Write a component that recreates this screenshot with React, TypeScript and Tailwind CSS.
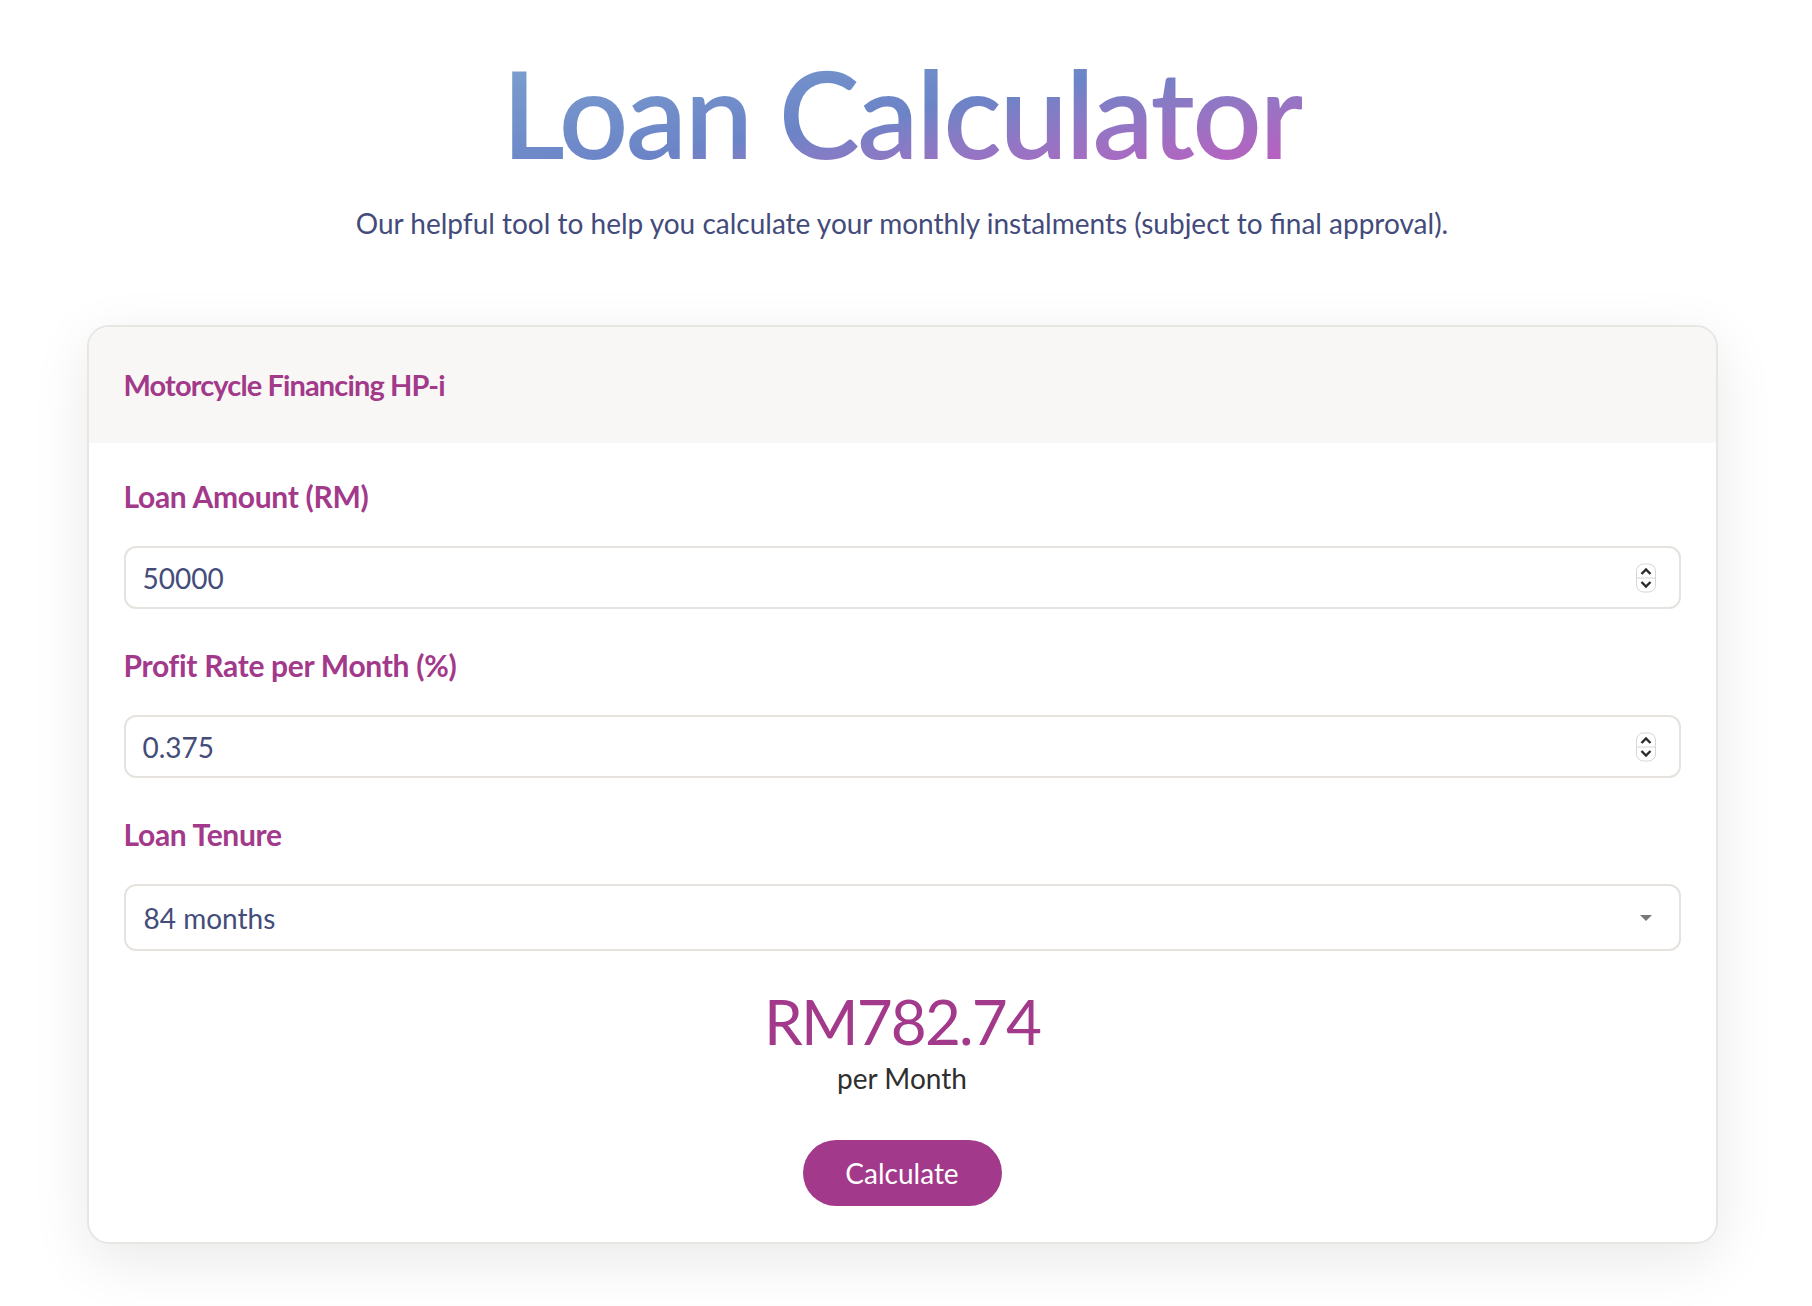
import { useState } from "react";

const font = { fontFamily: "Lato, 'Noto Sans', sans-serif" };

const Spinner = () => (
  <svg width="22" height="30" viewBox="0 0 22 30" className="shrink-0">
    <rect x="1.5" y="1" width="19" height="28" rx="7" fill="#fff" stroke="#d9d6d2" />
    <line x1="1.5" y1="15" x2="20.5" y2="15" stroke="#d9d6d2" />
    <path d="M6.5 11 L11 6.5 L15.5 11" fill="none" stroke="#2a2a2a" strokeWidth="2.4" />
    <path d="M6.5 19 L11 23.5 L15.5 19" fill="none" stroke="#2a2a2a" strokeWidth="2.4" />
  </svg>
);

const NumberField = ({ label, value }: { label: string; value: string }) => (
  <div className="flex flex-col">
    <label className="text-[30px] font-bold text-[#a2398a] tracking-[-0.01em] leading-[40px]">{label}</label>
    <div className="mt-[30px] flex items-center h-[63px] rounded-[12px] border-2 border-[#e6e3de] bg-white pl-[17px] pr-[22px]">
      <input
        readOnly
        value={value}
        className="flex-1 bg-transparent outline-none text-[28px] text-[#444c7a]"
        style={font}
      />
      <Spinner />
    </div>
  </div>
);

export default function App() {
  const [amount] = useState("50000");
  const [rate] = useState("0.375");

  return (
    <div className="min-h-[1306px] bg-white flex flex-col items-center pr-[8px]" style={font}>
      <h1 className="mt-[42px] text-[122px] font-semibold leading-[140px] tracking-[-0.02em] bg-gradient-to-br from-[#7ea3cf] via-[#6b84c7] to-[#c653be] bg-clip-text text-transparent">
        Loan Calculator
      </h1>
      <p className="mt-[23px] text-[28px] text-[#434b7b] leading-[36px]">
        Our helpful tool to help you calculate your monthly instalments (subject to final approval).
      </p>

      <div className="mt-[84px] w-[1631px] rounded-[22px] border-2 border-[#e8e6e2] bg-white shadow-[0_16px_60px_rgba(0,0,0,0.09)] overflow-hidden">
        <div className="h-[116px] bg-[#f8f7f5] flex items-center px-[35px]">
          <h2 className="text-[29px] font-bold text-[#a2398a] tracking-[-0.03em]">Motorcycle Financing HP-i</h2>
        </div>

        <div className="px-[35px] pt-[33px] pb-[36px] flex flex-col gap-[36px]">
          <NumberField label="Loan Amount (RM)" value={amount} />
          <NumberField label="Profit Rate per Month (%)" value={rate} />

          <div className="flex flex-col">
            <label className="text-[30px] font-bold text-[#a2398a] tracking-[-0.01em] leading-[40px]">Loan Tenure</label>
            <div className="mt-[30px] flex items-center h-[67px] rounded-[12px] border-2 border-[#e6e3de] bg-white pl-[18px] pr-[26px]">
              <span className="flex-1 text-[28px] text-[#444c7a]">84 months</span>
              <svg width="14" height="8" viewBox="0 0 14 8">
                <path d="M1 1 L13 1 L7 7 Z" fill="#777" />
              </svg>
            </div>
          </div>

          <div className="-mt-[4px] flex flex-col items-center">
            <div className="text-[62px] leading-[76px] text-[#a2398a] tracking-[-0.03em]">RM782.74</div>
            <div className="mt-[2px] text-[28px] leading-[34px] text-[#2f2f2f]">per Month</div>
            <button className="mt-[45px] w-[199px] h-[66px] rounded-full bg-[#a2398a] text-white text-[28px]">
              Calculate
            </button>
          </div>
        </div>
      </div>
    </div>
  );
}
